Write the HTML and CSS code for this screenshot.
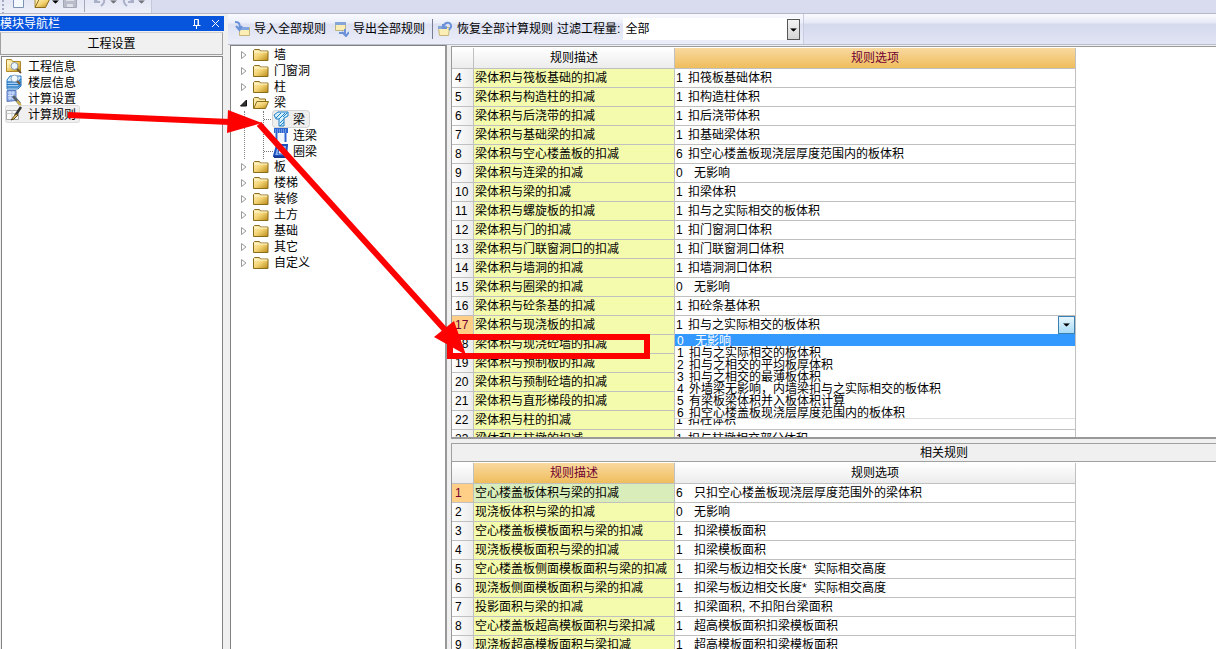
FILE: index.html
```html
<!DOCTYPE html>
<html lang="zh-CN">
<head>
<meta charset="utf-8">
<title>工程设置 - 计算规则</title>
<link rel="stylesheet" href="styles.css">
</head>
<body>
<svg class="defs" aria-hidden="true">
  <defs>
    <linearGradient id="gold" x1="0" y1="0" x2="1" y2="1"><stop offset="0" stop-color="#fff3c0"/><stop offset=".5" stop-color="#f3d271"/><stop offset="1" stop-color="#b88a18"/></linearGradient>
    <symbol id="folder" viewBox="0 0 16 16"><path d="M.5 13.500V3.500l1-1h5l1 1.500h7.500v9.500z" fill="url(#gold)" stroke="#8a6c1c"/><path d="M1.500 5h13" stroke="#fff6cf"/></symbol>
    <symbol id="folder-open" viewBox="0 0 16 16"><path d="M.5 13.500V3.500l1-1h4l1 1.500h6v3" fill="#fbe9a6" stroke="#8a6c1c"/><path d="M.8 13.500l3-7h11.700l-3 7z" fill="url(#gold)" stroke="#8a6c1c"/></symbol>
    <symbol id="closed" viewBox="0 0 8 10"><path d="M1.500 1.500L6 5 1.500 8.500z" fill="#fff" stroke="#999"/></symbol>
    <symbol id="opened" viewBox="0 0 8 10"><path d="M6.500 2v6h-6z" fill="#333" stroke="#111"/></symbol>
    <symbol id="down" viewBox="0 0 8 4"><path d="M0 0h8L4 4z" fill="#000"/></symbol>
  </defs>
</svg>
<div class="app">
  <header class="topbar">
    <div class="topbar-tools">
      <svg class="grip" viewBox="0 0 4 14" aria-hidden="true"><path d="M2 0v14" stroke="#a3abc2" stroke-width="2" stroke-dasharray="2 2"/></svg>
      <button aria-label="新建"><svg width="16" height="16" viewBox="0 0 16 16"><path d="M2.500 0v15.500h10V0" fill="#f4f9ff" stroke="#7c93b3"/></svg></button>
      <button aria-label="打开"><svg width="16" height="16" viewBox="0 0 16 16"><path d="M1 15V4h5l2 2h5v3" fill="#fbe9a6" stroke="#a98a3a"/><path d="M1 15.500l4-8h10.500l-4 8z" fill="url(#gold)" stroke="#8a6c1c"/></svg></button>
      <svg class="caret" viewBox="0 0 8 4" aria-hidden="true"><use href="#down"/></svg>
      <button aria-label="保存"><svg width="16" height="16" viewBox="0 0 16 16"><path d="M1.500 1v14.500h13V1z" fill="#b9bcc9" stroke="#a2a6b5"/><path d="M4 1h8v8H4zM5 12h6v3H5z" fill="#dfe1ea"/></svg></button>
      <span class="tool-line"></span>
      <button aria-label="撤销"><svg width="16" height="16" viewBox="0 0 16 16"><path d="M3 5v5h5M3 10c4-6 10-5 9 0-.5 2-2 3-3 4" fill="none" stroke="#a9b0c8" stroke-width="2"/></svg></button>
      <svg class="caret dim" viewBox="0 0 8 4" aria-hidden="true"><use href="#down"/></svg>
      <button aria-label="重做"><svg width="16" height="16" viewBox="0 0 16 16"><path d="M13 5v5H8M13 10C9 4 3 5 4 10c.5 2 2 3 3 4" fill="none" stroke="#a9b0c8" stroke-width="2"/></svg></button>
      <svg class="caret dim" viewBox="0 0 8 4" aria-hidden="true"><use href="#down"/></svg>
    </div>
  </header>
  <div class="workspace">
    <aside class="nav">
      <div class="nav-title"><span>模块导航栏</span>
        <button aria-label="固定"><svg width="10" height="10" viewBox="0 0 10 10"><path d="M2.500 6V.5h4V6M1 6.500h7.500M4.500 7v3M6 1v5" fill="none" stroke="#fff"/></svg></button>
        <button aria-label="关闭"><svg width="9" height="9" viewBox="0 0 9 9"><path d="M1 1l7 7M8 1L1 8" stroke="#fff"/></svg></button>
      </div>
      <button class="nav-group">工程设置</button>
      <ul class="nav-list">
        <li><svg class="ico" viewBox="0 0 16 16"><path d="M.5 13.500v-12h5l1 2h8v10z" fill="url(#gold)" stroke="#b08a2a"/><path d="M2 2v8M5 4v6M1 5h6" stroke="#fff6c8"/><circle cx="8.500" cy="8" r="3.500" fill="#eaf5ff" stroke="#8799ad"/><path d="M11 11l4 4" stroke="#6b5735" stroke-width="2"/></svg><a href="#info">工程信息</a></li>
        <li><svg class="ico" viewBox="0 0 16 16"><path d="M4 2h11v10l-3 3H1V6z" fill="#d5ecff" stroke="#2477c4"/><path d="M1 8h11l3-3M1 10.500h11l3-3M1 13h11l3-3" fill="none" stroke="#2477c4" stroke-width="1.500"/><circle cx="8.500" cy="4.500" r="3.500" fill="#f2faff" stroke="#8ba4be"/><path d="M11 7l3 3" stroke="#745a38" stroke-width="2"/></svg><a href="#floors">楼层信息</a></li>
        <li><svg class="ico" viewBox="0 0 16 16"><path d="M1 .5h9v10l-9 1z" fill="#8aa9e6" stroke="#5c7cc0"/><path d="M2 3h7M2 5.500h7M2 8h7M4 1v9M7 1v9" stroke="#d2e0fb"/><path d="M7 6l7 8" stroke="#54606e" stroke-width="3"/><path d="M11 11l4 4" stroke="#d5b34b" stroke-width="2"/></svg><a href="#settings">计算设置</a></li>
        <li class="current"><svg class="ico" viewBox="0 0 16 16"><path d="M.5 4.500h12v9H.5z" fill="#fbfbfb" stroke="#aaa"/><path d="M.5 7.500h12M6 4v9" stroke="#ccc"/><path d="M15 1L9 10" stroke="#333" stroke-width="2.500"/><path d="M10 8l-5 6 3-1 4-4z" fill="#e8c766" stroke="#614a1a"/></svg><a href="#rules">计算规则</a></li>
      </ul>
    </aside>
    <main class="main">
      <div class="toolbar">
        <div class="toolbar-tools">
          <button><svg class="ico" viewBox="0 0 16 16"><path d="M5.500 6.500h10v8h-10z" fill="#fbeeb4" stroke="#c6b778"/><path d="M6 6h9v3H6z" fill="#7fa6e0"/><path d="M1 1c5 0 5 3 4.500 6M2 5l3.500 4L8 5" fill="none" stroke="#6b92d8" stroke-width="2"/></svg>导入全部规则</button>
          <button><svg class="ico" viewBox="0 0 16 16"><path d="M2.500 1.500h10v8h-10z" fill="#fbeeb4" stroke="#b9b487"/><path d="M2 1h11v3H2z" fill="#87a6d8"/><path d="M6 12h6V8M9 11l4 4 3-4" fill="none" stroke="#6b92d8" stroke-width="2"/></svg>导出全部规则</button>
          <span class="tool-line tall"></span>
          <button><svg class="ico" viewBox="0 0 16 16"><path d="M1.500 6.500h11l-1 8h-9z" fill="#fbeeb4" stroke="#c6b778"/><path d="M1 5h9v3H1z" fill="#87a6d8"/><path d="M7 5c1-5 8-4 7 1l-2 3M6 3v4h4" fill="none" stroke="#6b92d8" stroke-width="2"/></svg>恢复全部计算规则</button>
          <label for="filter">过滤工程量:</label>
          <span class="combo"><select id="filter"><option>全部</option></select><span class="combo-arrow"><svg viewBox="0 0 8 4"><use href="#down"/></svg></span></span>
        </div>
      </div>
      <div class="content">
        <nav class="tree">
          <ul>
            <li class="node"><svg class="tw"><use href="#closed"/></svg><svg class="ico"><use href="#folder"/></svg><span>墙</span></li>
            <li class="node"><svg class="tw"><use href="#closed"/></svg><svg class="ico"><use href="#folder"/></svg><span>门窗洞</span></li>
            <li class="node"><svg class="tw"><use href="#closed"/></svg><svg class="ico"><use href="#folder"/></svg><span>柱</span></li>
            <li class="node"><svg class="tw"><use href="#opened"/></svg><svg class="ico"><use href="#folder-open"/></svg><span>梁</span></li>
            <li class="branch">
              <ul>
                <li class="leaf chosen"><b><svg class="ico" viewBox="0 0 16 16"><path d="M1 4l4-3h10v4l-4 2v8H6V8L3 8z" fill="#d5efff" stroke="#1d7fc4"/><path d="M3 7l5-5M6 8l6-6M7 12l4-4M7 15l4-4M10 6l4-4" stroke="#1d7fc4"/></svg><span>梁</span></b></li>
                <li class="leaf"><b><svg class="ico" viewBox="0 0 16 16"><path d="M1 1h14v5H1z" fill="#2e66d0"/><path d="M2 3h12M2 5h12" stroke="#a9c8ff" stroke-dasharray="1 1"/><path d="M3.500 6v9M12.500 6v9" stroke="#2e66d0" stroke-width="2"/><path d="M5 7h6v8H5z" fill="#eef5ff"/></svg><span>连梁</span></b></li>
                <li class="leaf"><b><svg class="ico" viewBox="0 0 16 16"><path d="M4 2h10l-1 11H1z" fill="#8db6f2" stroke="#1d4fbe" stroke-width="2"/><path d="M6 5h5l-1 6H5z" fill="#eef5ff" stroke="#1d4fbe"/><path d="M1 14h13" stroke="#173b91" stroke-width="2"/></svg><span>圈梁</span></b></li>
              </ul>
            </li>
            <li class="node"><svg class="tw"><use href="#closed"/></svg><svg class="ico"><use href="#folder"/></svg><span>板</span></li>
            <li class="node"><svg class="tw"><use href="#closed"/></svg><svg class="ico"><use href="#folder"/></svg><span>楼梯</span></li>
            <li class="node"><svg class="tw"><use href="#closed"/></svg><svg class="ico"><use href="#folder"/></svg><span>装修</span></li>
            <li class="node"><svg class="tw"><use href="#closed"/></svg><svg class="ico"><use href="#folder"/></svg><span>土方</span></li>
            <li class="node"><svg class="tw"><use href="#closed"/></svg><svg class="ico"><use href="#folder"/></svg><span>基础</span></li>
            <li class="node"><svg class="tw"><use href="#closed"/></svg><svg class="ico"><use href="#folder"/></svg><span>其它</span></li>
            <li class="node"><svg class="tw"><use href="#closed"/></svg><svg class="ico"><use href="#folder"/></svg><span>自定义</span></li>
          </ul>
        </nav>
        <div class="panes">
          <section class="pane upper">
            <table class="grid">
              <colgroup><col class="c-num"><col class="c-desc"><col class="c-opt"></colgroup>
              <thead><tr><th></th><th>规则描述</th><th class="active">规则选项</th></tr></thead>
              <tbody>
                <tr><th>4</th><td>梁体积与筏板基础的扣减</td><td><i>1</i>扣筏板基础体积</td></tr>
                <tr><th>5</th><td>梁体积与构造柱的扣减</td><td><i>1</i>扣构造柱体积</td></tr>
                <tr><th>6</th><td>梁体积与后浇带的扣减</td><td><i>1</i>扣后浇带体积</td></tr>
                <tr><th>7</th><td>梁体积与基础梁的扣减</td><td><i>1</i>扣基础梁体积</td></tr>
                <tr><th>8</th><td>梁体积与空心楼盖板的扣减</td><td><i>6</i>扣空心楼盖板现浇层厚度范围内的板体积</td></tr>
                <tr><th>9</th><td>梁体积与连梁的扣减</td><td><i class="wide">0</i>无影响</td></tr>
                <tr><th>10</th><td>梁体积与梁的扣减</td><td><i>1</i>扣梁体积</td></tr>
                <tr><th>11</th><td>梁体积与螺旋板的扣减</td><td><i>1</i>扣与之实际相交的板体积</td></tr>
                <tr><th>12</th><td>梁体积与门的扣减</td><td><i>1</i>扣门窗洞口体积</td></tr>
                <tr><th>13</th><td>梁体积与门联窗洞口的扣减</td><td><i>1</i>扣门联窗洞口体积</td></tr>
                <tr><th>14</th><td>梁体积与墙洞的扣减</td><td><i>1</i>扣墙洞洞口体积</td></tr>
                <tr><th>15</th><td>梁体积与圈梁的扣减</td><td><i class="wide">0</i>无影响</td></tr>
                <tr><th>16</th><td>梁体积与砼条基的扣减</td><td><i>1</i>扣砼条基体积</td></tr>
                <tr><th class="active">17</th><td>梁体积与现浇板的扣减</td><td class="editing"><i>1</i>扣与之实际相交的板体积<button class="drop" aria-label="展开选项" aria-expanded="true"><svg viewBox="0 0 8 4"><use href="#down"/></svg></button>
                  <ul class="options" role="listbox">
                    <li role="option" aria-selected="true"><i class="wide">0</i>无影响</li>
                    <li role="option"><i>1</i>扣与之实际相交的板体积</li>
                    <li role="option"><i>2</i>扣与之相交的平均板厚体积</li>
                    <li role="option"><i>3</i>扣与之相交的最薄板体积</li>
                    <li role="option"><i>4</i>外墙梁无影响，内墙梁扣与之实际相交的板体积</li>
                    <li role="option"><i>5</i>有梁板梁体积并入板体积计算</li>
                    <li role="option"><i>6</i>扣空心楼盖板现浇层厚度范围内的板体积</li>
                  </ul></td></tr>
                <tr><th>18</th><td>梁体积与现浇砼墙的扣减</td><td></td></tr>
                <tr><th>19</th><td>梁体积与预制板的扣减</td><td></td></tr>
                <tr><th>20</th><td>梁体积与预制砼墙的扣减</td><td></td></tr>
                <tr><th>21</th><td>梁体积与直形梯段的扣减</td><td></td></tr>
                <tr><th>22</th><td>梁体积与柱的扣减</td><td><i>1</i>扣柱体积</td></tr>
                <tr><th>23</th><td>梁体积与柱墩的扣减</td><td><i>1</i>扣与柱墩相交部分体积</td></tr>
              </tbody>
            </table>
          </section>
          <h2 class="related">相关规则</h2>
          <section class="pane lower">
            <table class="grid">
              <colgroup><col class="c-num"><col class="c-desc"><col class="c-opt"></colgroup>
              <thead><tr><th></th><th class="active">规则描述</th><th>规则选项</th></tr></thead>
              <tbody>
                <tr><th class="active">1</th><td class="focus">空心楼盖板体积与梁的扣减</td><td><i class="wide">6</i>只扣空心楼盖板现浇层厚度范围外的梁体积</td></tr>
                <tr><th>2</th><td>现浇板体积与梁的扣减</td><td><i class="wide">0</i>无影响</td></tr>
                <tr><th>3</th><td>空心楼盖板模板面积与梁的扣减</td><td><i class="wide">1</i>扣梁模板面积</td></tr>
                <tr><th>4</th><td>现浇板模板面积与梁的扣减</td><td><i class="wide">1</i>扣梁模板面积</td></tr>
                <tr><th>5</th><td>空心楼盖板侧面模板面积与梁的扣减</td><td><i class="wide">1</i>扣梁与板边相交长度<i>*</i>实际相交高度</td></tr>
                <tr><th>6</th><td>现浇板侧面模板面积与梁的扣减</td><td><i class="wide">1</i>扣梁与板边相交长度<i>*</i>实际相交高度</td></tr>
                <tr><th>7</th><td>投影面积与梁的扣减</td><td><i class="wide">1</i>扣梁面积, 不扣阳台梁面积</td></tr>
                <tr><th>8</th><td>空心楼盖板超高模板面积与梁扣减</td><td><i class="wide">1</i>超高模板面积扣梁模板面积</td></tr>
                <tr><th>9</th><td>现浇板超高模板面积与梁扣减</td><td><i class="wide">1</i>超高模板面积扣梁模板面积</td></tr>
              </tbody>
            </table>
          </section>
        </div>
      </div>
    </main>
  </div>
  <svg class="marks" width="700" height="380" viewBox="0 0 700 380" aria-hidden="true">
    <path d="M68 115L230 122M259 124L446 331" stroke="#f00" stroke-width="6"/>
    <path d="M228 110L262 123 227 133zM434 337L454 321 466 355z" fill="#f00"/>
    <path d="M450 337h197v19H450z" fill="none" stroke="#f00" stroke-width="6"/>
  </svg>
</div>
</body>
</html>
```

FILE: styles.css
```css
* { box-sizing: border-box; }
body {
  margin: 0;
  font: 12px/16px "Liberation Sans", "Noto Sans CJK SC", sans-serif;
  color: #000;
}
ul { list-style: none; margin: 0; padding: 0; }
button { border: 0; padding: 0; background: none; font: inherit; color: inherit; }
a { color: inherit; text-decoration: none; }
i { font-style: normal; display: inline-block; width: 12px; }
i.wide { width: 18px; }
.defs { position: absolute; width: 0; height: 0; }
.ico { width: 16px; height: 16px; flex: none; }

.app { position: relative; height: 100vh; display: flex; flex-direction: column; overflow: hidden; background: #f0f0f0; }
.topbar { flex: none; height: 14px; overflow: hidden; background: #d8dcee; border-bottom: 1px solid #b4b8c8; }
.topbar-tools { display: flex; width: 152px; height: 14px; align-items: flex-start; gap: 2px; background: linear-gradient(#e4e7f4, #eef0f8); border-right: 1px solid #c3c8da; }
.topbar-tools button { height: 16px; margin-top: -8px; margin-left: 1px; }
.topbar-tools button + button { margin-left: 5px; }
.grip { width: 4px; height: 14px; margin: 0 3px 0 1px; }
.caret { width: 7px; height: 4px; flex: none; }
.dim { opacity: .5; }
.tool-line { width: 1px; height: 12px; background: #a5a9ba; margin: 0 4px; }
.tool-line.tall { height: 20px; background: #777c90; }

.workspace { flex: 1; min-height: 0; display: flex; gap: 4px; }
.nav { flex: 0 0 224px; display: flex; flex-direction: column; padding-top: 2px; }
.nav-title { display: flex; align-items: center; height: 15px; background: #0855dd; color: #fff; gap: 9px; padding-right: 4px; }
.nav-title span { flex: 1; }
.nav-title button { height: 10px; display: flex; }
.nav-group { height: 23px; margin: 1px 1px 1px 0; line-height: 22px; background: #f0f0f0; border: 1px solid #a0a0a0; border-top-color: #d0d0d0; }
.nav-list { flex: 1; margin: 0 1px 0 1px; padding: 1px 4px; background: #fff; border: 1px solid #828282; border-width: 1px 1px 0 1px; }
.nav-list li { display: flex; gap: 6px; height: 16px; line-height: 18px; width: 73px; white-space: nowrap; }
.nav-list .current { background: #f0f0f0; border-radius: 2px; box-shadow: 0 0 0 1px #ddd; }

.main { flex: 1; min-width: 0; display: flex; flex-direction: column; }
.toolbar { flex: none; height: 31px; background: linear-gradient(#fafbff 0, #e6e9f6 9px, #d4d9ed 10px, #e1e4f4); border-bottom: 1px solid #b9bdcb; }
.toolbar-tools { display: flex; align-items: center; width: 576px; height: 30px; padding-left: 6px; border-right: 1px solid #c9cde0; background: linear-gradient(#fafbff 0, #eceff9 9px, #dde1f2 10px, #eceef8); white-space: nowrap; }
.toolbar-tools button { display: flex; align-items: center; gap: 4px; margin-right: 7px; line-height: 18px; }
.toolbar-tools .tall { margin: 0 4px 0 0; }
.toolbar-tools label { margin-left: -3px; line-height: 18px; }
.combo { position: relative; flex: 1; height: 22px; margin: 0 3px 0 3px; }
.combo select { width: 100%; height: 22px; padding: 0 2px; border: 0; background: #fff; appearance: none; font: inherit; color: #000; }
.combo-arrow { position: absolute; right: 0; top: 1px; width: 13px; height: 21px; border: 1px solid #555; background: linear-gradient(#f4f4f4, #d4d4d4); display: flex; align-items: center; justify-content: center; pointer-events: none; }
.combo-arrow svg, .drop svg { width: 7px; height: 4px; }

.content { flex: 1; min-height: 0; display: flex; gap: 4px; }
.tree { flex: 0 0 217px; margin-left: 2px; background: #fff; border: 1px solid #828282; border-right: 2px solid #999; border-bottom: 0; padding: 1px 0 0 9px; }
.node { display: flex; align-items: center; height: 16px; line-height: 18px; }
.tw { width: 8px; height: 10px; margin-right: 5px; }
.node .ico { margin-right: 5px; }
.branch { margin-left: 4px; padding-left: 18px; border-left: 1px dotted #888; }
.branch ul { border-left: 1px dotted #777; }
.leaf { height: 16px; line-height: 18px; display: flex; }
.leaf::before { content: ""; width: 9px; height: 8px; border-bottom: 1px dotted #777; }
.leaf:nth-child(2)::before { border: 0; }
.leaf b { font-weight: normal; display: flex; gap: 4px; padding-right: 4px; }
.leaf.chosen b { background: #eee; border-radius: 3px; box-shadow: 0 0 0 1px #d4d4d4; }

.panes { flex: 1; min-width: 0; display: flex; flex-direction: column; }
.pane { min-height: 0; overflow: hidden; background: #fff; border: 1px solid #999; border-right: 0; border-bottom: 0; padding-top: 1px; }
.upper { flex: 65 1 0; margin-top: 1px; border-bottom: 2px solid #999; }
.related { flex: none; height: 19px; margin: 4px 0 0; padding-left: 220px; font: inherit; line-height: 18px; text-align: center; border: 1px solid #a0a0a0; border-right: 0; }
.lower { flex: 31 1 0; border-top: 0; }

.grid { table-layout: fixed; width: 624px; border-collapse: separate; border-spacing: 0; white-space: nowrap; }
.c-num { width: 22px; }
.c-desc { width: 201px; }
.grid th, .grid td { padding: 0 1px; height: 19px; line-height: 18px; font-weight: normal; text-align: left; border: solid #c0c0c0; border-width: 0 1px 1px 0; overflow: hidden; }
.grid thead th { height: 21px; line-height: 20px; text-align: center; background: linear-gradient(#fff, #ececec); }
.grid thead .active { background: linear-gradient(#f9d9a0, #efbd5c); color: #700030; }
.grid tbody th { padding-left: 3px; background: linear-gradient(90deg, #fff, #ececec); }
.grid tbody th.active { background: #ffcf88; color: #700030; }
.grid td:nth-child(2) { background: #f5fbad; }
.grid td.focus { background: #d8edb9; }
.grid td.editing { position: relative; overflow: visible; }
.drop { position: absolute; top: 0; right: 0; width: 17px; height: 18px; border: 1px solid #3c7fb1; background: linear-gradient(#e8f6fd, #a9dbf6); display: flex; align-items: center; justify-content: center; }
.options { position: absolute; z-index: 1; top: 100%; left: 0; right: 0; background: #fff; border-bottom: 1px solid #ddd; }
.options li { height: 12px; line-height: 14px; padding-left: 2px; }
.options [aria-selected] { background: #3399ff; color: #fff; }

.marks { position: absolute; z-index: 2; top: 0; left: 0; pointer-events: none; }
```
